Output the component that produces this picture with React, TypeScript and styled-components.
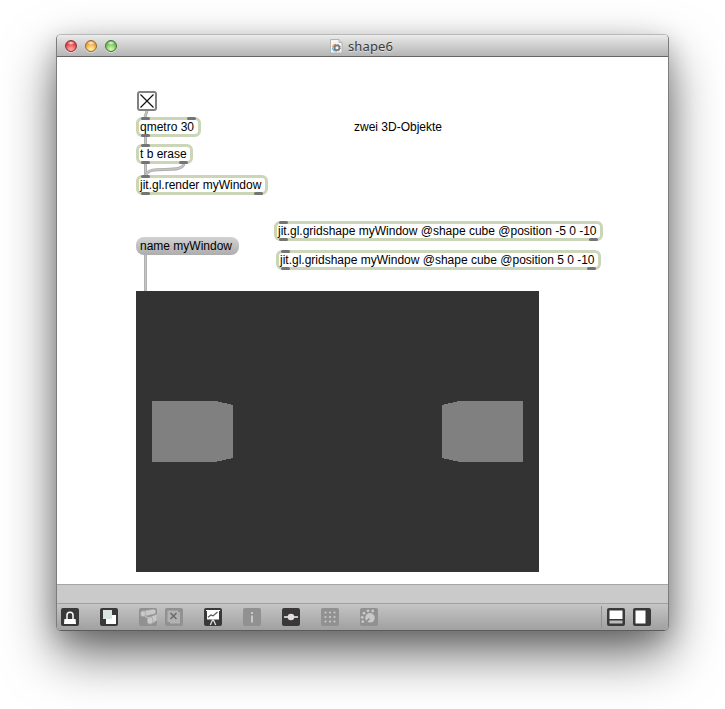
import React from 'react';
import styled, { createGlobalStyle } from 'styled-components';

const GlobalStyle = createGlobalStyle`
  * { box-sizing: border-box; }
  body { margin: 0; background: #fff; overflow: hidden; }
  svg { display: block; }
`;

const Desktop = styled.main`
  width: 725px;
  height: 709px;
  padding: 34px 56px 0;
  overflow: hidden;
  background: #fff;
`;

const Window = styled.section`
  display: flex;
  flex-direction: column;
  width: 613px;
  height: 597px;
  border: 1px solid #7c7c7c;
  border-top-color: #b9b9b9;
  border-bottom-color: #5c5c5c;
  border-radius: 5px;
  overflow: hidden;
  background: #fff;
  box-shadow: 0 24px 52px rgba(0, 0, 0, 0.56), 0 8px 24px rgba(0, 0, 0, 0.2);
  font-family: 'Liberation Sans', Arial, sans-serif;
`;

const TitleBar = styled.header`
  display: grid;
  grid-template-columns: 1fr auto 1fr;
  align-items: center;
  flex: 0 0 22px;
  padding: 0 0 0 8px;
  border-bottom: 1px solid #666;
  background: linear-gradient(#ececec, #dcdcdc 25%, #b5b5b5);
`;

const Lights = styled.div`
  display: flex;
  gap: 8px;
`;

const Light = styled.span<{ $edge: string; $mid: string; $glow: string }>`
  width: 12px;
  height: 12px;
  border-radius: 50%;
  border: 1px solid ${p => p.$edge};
  background:
    radial-gradient(ellipse 4px 2px at 50% 20%, rgba(255, 255, 255, 0.9), transparent),
    radial-gradient(circle at 50% 85%, ${p => p.$glow} 10%, ${p => p.$mid} 70%);
  box-shadow: 0 1px 0 rgba(255, 255, 255, 0.45);
`;

const Title = styled.h1`
  display: flex;
  align-items: center;
  gap: 5px;
  margin: 0 2px 0 -8px;
  font: 400 13px/18px 'Noto Sans', sans-serif;
  letter-spacing: 0.1px;
  color: #3c3c3c;
  text-shadow: 0 1px 0 rgba(255, 255, 255, 0.5);
`;

const Patcher = styled.div`
  position: relative;
  flex: 0 0 527px;
  background: #fff;
`;

const Cords = styled.svg`
  position: absolute;
  left: 0;
  top: 0;
`;

const Node = styled.div<{ $x: number; $y: number; $w: number }>`
  position: absolute;
  left: ${p => p.$x}px;
  top: ${p => p.$y}px;
  width: ${p => p.$w}px;
`;

const ObjectFrame = styled(Node)`
  height: 20px;
  padding-left: 1px;
  border: 3px solid #cbd6b8;
  border-radius: 6px;
  background: #fff;
  font-size: 12px;
  line-height: 14px;
  white-space: nowrap;
  color: #000;
`;

const Port = styled.i<{ $x: number; $out?: boolean }>`
  position: absolute;
  left: ${p => p.$x - 3}px;
  ${p => (p.$out ? 'bottom: -3px' : 'top: -3px')};
  width: 9px;
  height: 3px;
  border-radius: 1.5px;
  background: #747474;
`;

const Toggle = styled(Node)`
  height: 20px;
  border: 2px solid #808080;
  border-radius: 3px;
  background: #fff;
`;

const Message = styled(Node)`
  height: 18px;
  padding-left: 4px;
  border-radius: 8px;
  background: linear-gradient(#d2d2d2, #adadad);
  font-size: 12px;
  line-height: 18px;
  white-space: nowrap;
`;

const Comment = styled(Node)`
  font-size: 12px;
  line-height: 14px;
  white-space: nowrap;
`;

const RenderView = styled(Node)`
  height: 281px;
  background: #333;
`;

const StatusBar = styled.div`
  flex: 0 0 19px;
  border-top: 1px solid #a5a5a5;
  background: #cacaca;
`;

const Toolbar = styled.footer`
  display: flex;
  align-items: flex-start;
  flex: 1;
  padding: 4px 17px 0 4px;
  border-top: 1px solid #a0a0a0;
  background: linear-gradient(#c5c5c5, #a0a0a0);
`;

const Tools = styled.div`
  display: flex;
  gap: 21px;
`;

const ToolPair = styled.div`
  display: flex;
  gap: 8px;
`;

const PanelTools = styled(ToolPair)`
  margin-left: auto;
`;

const Divider = styled.span`
  width: 1px;
  height: 22px;
  margin: -2px -3px 0 0;
  background: #929292;
`;

const Tile = styled.span<{ $off?: boolean }>`
  width: 18px;
  height: 18px;
  border-radius: 2px;
  background: ${p => (p.$off ? '#919191' : '#393939')};
`;

type PatchObjectProps = { x: number; y: number; w: number; label: string; inlets: number[]; outlets: number[] };

function PatchObject({ x, y, w, label, inlets, outlets }: PatchObjectProps) {
  return (
    <ObjectFrame $x={x} $y={y} $w={w}>
      {label}
      {inlets.map(p => <Port key={`in${p}`} $x={p} />)}
      {outlets.map(p => <Port key={`out${p}`} $x={p} $out />)}
    </ObjectFrame>
  );
}

const objects: PatchObjectProps[] = [
  { x: 79, y: 60, w: 65, label: 'qmetro 30', inlets: [5, 51], outlets: [5] },
  { x: 79, y: 87, w: 57, label: 't b erase', inlets: [5], outlets: [5, 43] },
  { x: 79, y: 118, w: 132, label: 'jit.gl.render myWindow', inlets: [5], outlets: [5, 118] },
  { x: 217, y: 164, w: 329, label: 'jit.gl.gridshape myWindow @shape cube @position -5 0 -10', inlets: [5], outlets: [5, 315] },
  { x: 219, y: 193, w: 325, label: 'jit.gl.gridshape myWindow @shape cube @position 5 0 -10', inlets: [5], outlets: [5, 311] },
];

const cords = ['M90 54L88 60', 'M88.5 80V87', 'M88.5 106V118', 'M127 106C127 118 91 107 89 118', 'M88.5 198V234'];

function Icon({ off, children }: { off?: boolean; children: React.ReactNode }) {
  return (
    <Tile $off={off}>
      <svg width="18" height="18" viewBox="0 0 18 18" fill="none">{children}</svg>
    </Tile>
  );
}

export default function App() {
  return (
    <Desktop>
      <GlobalStyle />
      <Window>
        <TitleBar>
          <Lights>
            <Light $edge="#8e3437" $mid="#dd353c" $glow="#ffa2a2" />
            <Light $edge="#97672e" $mid="#e79b36" $glow="#ffec9c" />
            <Light $edge="#40742f" $mid="#67b64d" $glow="#ccf5a7" />
          </Lights>
          <Title>
            <svg width="13" height="16" viewBox="0 0 13 16">
              <path d="M.5 1.5h8.5l3 3v10.5H.5z" fill="#f6f6f6" stroke="#b4b4b4" />
              <path d="M9 1.5v3h3" fill="#ddd" stroke="#b4b4b4" />
              <g fill="none" strokeWidth="1.2">
                <path d="M2.6 9.5a3.6 3.6 0 0 1 3-3.4" stroke="#e3a45a" />
                <path d="M2.6 10a3.6 3.6 0 0 0 3 3.2" stroke="#4cb5d9" />
                <circle cx="7" cy="9.8" r="2.4" stroke="#7a7a7a" strokeWidth="1.7" />
                <circle cx="7" cy="9.8" r="3.5" stroke="#7a7a7a" strokeWidth=".9" strokeDasharray="1.2 1.55" />
              </g>
            </svg>
            shape6
          </Title>
        </TitleBar>

        <Patcher>
          <Cords width="611" height="527">
            {cords.map(d => (
              <g key={d} fill="none">
                <path d={d} stroke="#adadad" strokeWidth="3" />
                <path d={d} stroke="#c6c6c6" strokeWidth="1.3" />
              </g>
            ))}
          </Cords>
          <Toggle $x={80} $y={34} $w={20}>
            <svg width="16" height="16"><path d="M1.5 1.5l13 13M14.5 1.5l-13 13" stroke="#111" strokeWidth="1.2" /></svg>
          </Toggle>
          {objects.map(o => <PatchObject key={o.label} {...o} />)}
          <Comment $x={297} $y={63} $w={100}>zwei 3D-Objekte</Comment>
          <Message $x={79} $y={180} $w={103}>name myWindow</Message>
          <RenderView $x={79} $y={234} $w={403}>
            <svg width="403" height="281" shapeRendering="crispEdges" fill="#808080">
              <path d="M16 110H80L97 114V167L79 171H16z" />
              <path d="M387 110H323L306 114V167L324 171H387z" />
            </svg>
          </RenderView>
        </Patcher>

        <StatusBar />
        <Toolbar>
          <Tools>
            <Icon>
              <path d="M6 11.5V7.2a3 3 0 0 1 6 0V11.5" stroke="#fff" strokeWidth="1.5" />
              <path d="M3.4 11h11.2l.4 5H3z" fill="#fff" />
            </Icon>
            <Icon>
              <path d="M6 7h10v9H6z" fill="#fff" />
              <path d="M3 2h9v9H3z" fill="#dce4e3" />
            </Icon>
            <ToolPair>
              <Icon off>
                <g fill="#c9c9c9" stroke="#999" strokeWidth=".6">
                  <path d="M3.5 3L15 1l2 1.5-.6 3.2L5 8.6z" />
                  <ellipse cx="4" cy="5.8" rx="2.6" ry="3" />
                  <path d="M10 9.3L18 6v6.5l-5 3.3z" />
                  <ellipse cx="11" cy="12.5" rx="3" ry="3.7" />
                </g>
                <path d="M6 8.5l4 1.5" stroke="#c9c9c9" />
              </Icon>
              <Icon off>
                <path d="M2.5 2.5H13V4h2v11.5H5V14H2.5z" fill="#b2b2b2" />
                <path d="M5.5 5l6 6M11.5 5l-6 6" stroke="#6c6c6c" strokeWidth="1.6" />
              </Icon>
            </ToolPair>
            <Icon>
              <path d="M3 2h12v9.5H3z" fill="#fff" />
              <path d="M2 2.5h14" stroke="#fff" />
              <path d="M4 9.2l3-2.2 2 .9L13.500 4" stroke="#555" strokeWidth="1.2" />
              <path d="M9 11v2M8.5 12L6.300 17M9.500 12l2.200 5" stroke="#ddd" strokeWidth="1.3" />
            </Icon>
            <Icon off>
              <path d="M8 4h2v2H8zM8 7.5h2v7H8z" fill="#c8c8c8" />
            </Icon>
            <Icon>
              <path d="M2 9h14" stroke="#e5dede" strokeWidth="1.7" />
              <circle cx="9" cy="9" r="3.3" fill="#e5dede" />
            </Icon>
            <Icon off>
              {[4.5, 9, 13.5].map(x => [4.5, 9, 13.5].map(y => (
                <circle key={`${x}-${y}`} cx={x} cy={y} r="1.1" fill="#c8c8c8" />
              )))}
            </Icon>
            <Icon off>
              <circle cx="10" cy="9.8" r="4.8" fill="#c8c8c8" />
              <path d="M9.5 10.5l-3 3" stroke="#858585" strokeWidth="1.5" />
              {[[2.8, 13.7], [2.2, 9.3], [4, 5.2], [8, 2.8], [12.7, 3]].map(([x, y]) => (
                <circle key={x} cx={x} cy={y} r="1.4" fill="#c8c8c8" />
              ))}
            </Icon>
          </Tools>
          <PanelTools>
            <Divider />
            <Icon>
              <path d="M2.5 2.5h13V11h-13z" fill="#fff" />
              <path d="M2.5 12.5h13v3h-13z" fill="#bdbdbd" />
            </Icon>
            <Icon>
              <path d="M2.5 2.5h10v13h-10z" fill="#fff" />
            </Icon>
          </PanelTools>
        </Toolbar>
      </Window>
    </Desktop>
  );
}
